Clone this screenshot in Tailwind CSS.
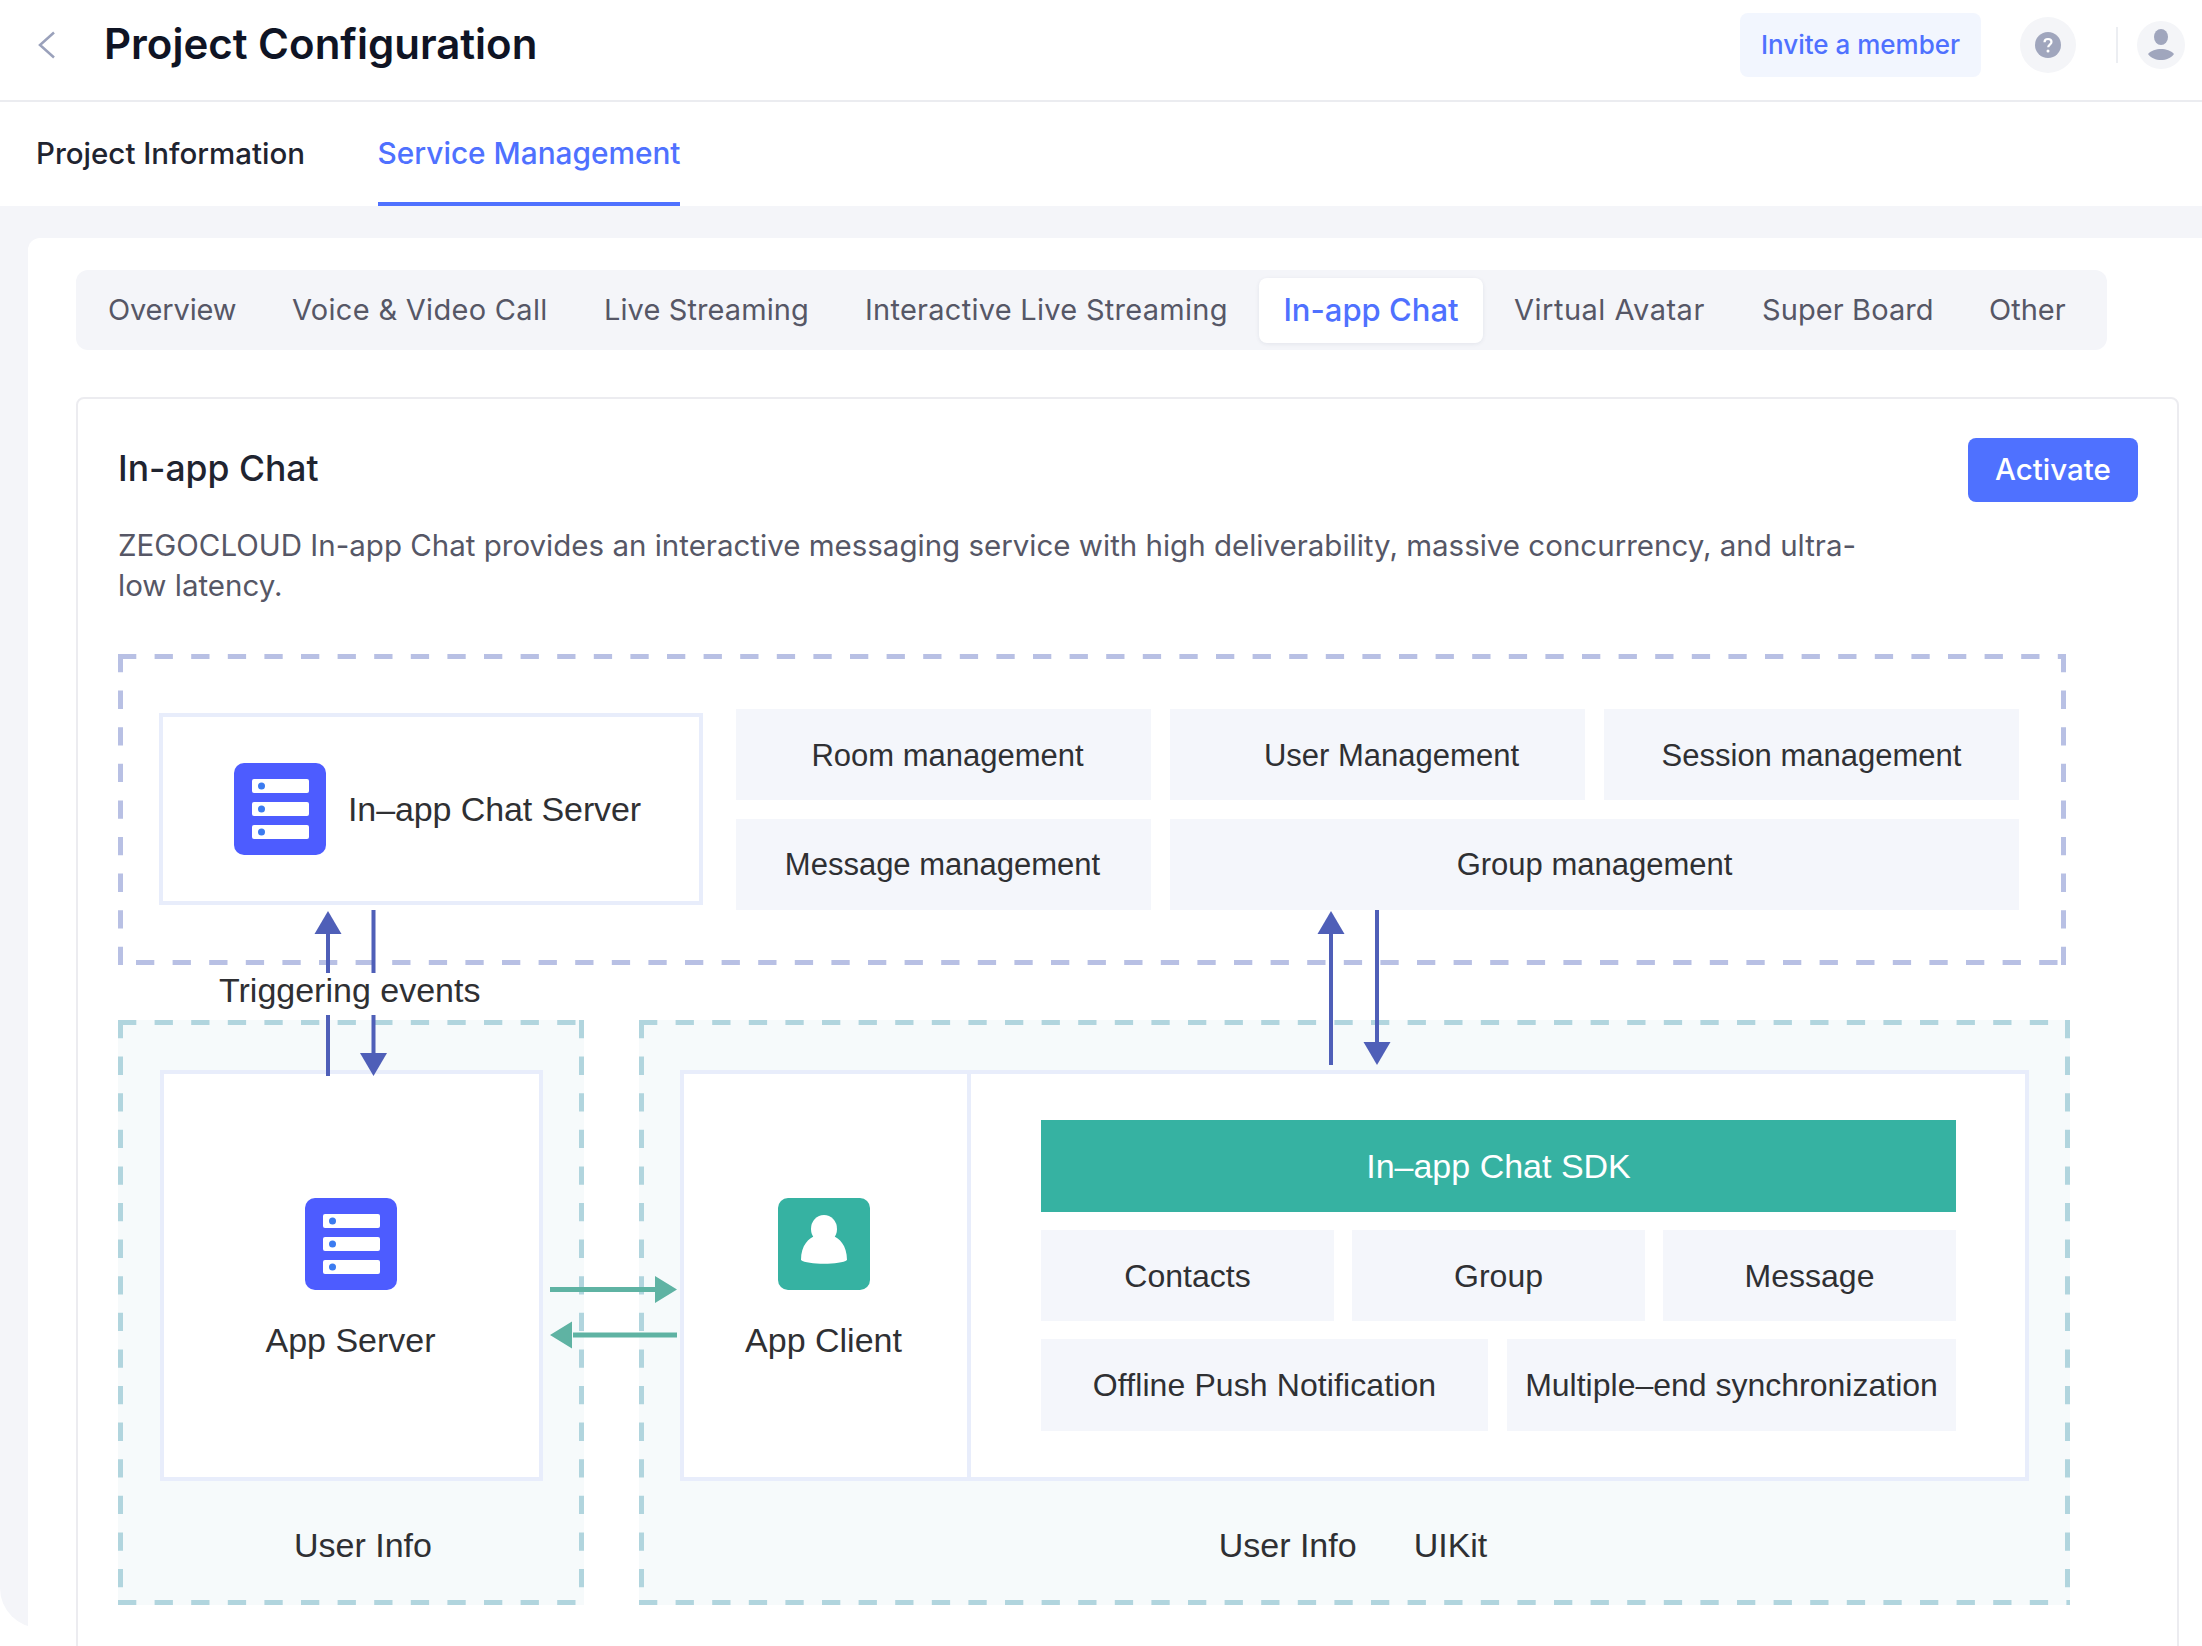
<!DOCTYPE html>
<html lang="en">
<head>
    <meta charset="UTF-8">
    <title>Project Configuration</title>
    <script src="https://cdn.jsdelivr.net/npm/@tailwindcss/browser@4"></script>
</head>
<body class="bg-white font-['Inter',sans-serif]">
<div class="relative w-[2202px] h-[1646px] overflow-hidden bg-white">

    <!-- top bar -->
    <header class="flex items-center h-[102px] border-b-2 border-[#ebecf0] pl-[38px] pr-[17px] pb-[10px]">
        <svg class="w-[18px] h-[28px]" viewBox="0 0 18 28" fill="none" stroke="#9aa1bb" stroke-width="2.500"><path d="M16 1.500 2 14l14 12.500"/></svg>
        <h1 class="ml-[48px] pb-[3px] text-[42px] font-semibold text-[#0f1424]">Project Configuration</h1>
        <button class="ml-auto w-[241px] h-[64px] pb-[2px] rounded-lg bg-[#f2f6fe] text-[#4f71ff] text-[26px] font-medium">Invite a member</button>
        <div class="ml-[39px] w-[56px] h-[56px] rounded-full bg-[#f4f5f8] flex items-center justify-center">
            <svg class="w-[26px] h-[26px]" viewBox="0 0 26 26"><circle cx="13" cy="13" r="13" fill="#a0a6bd"/><path d="M9.500 10.200c0-2 1.500-3.200 3.500-3.200s3.500 1.200 3.500 3c0 2.600-3.300 2.700-3.300 5.300" fill="none" stroke="#fff" stroke-width="2.200"/><circle cx="13" cy="19" r="1.500" fill="#fff"/></svg>
        </div>
        <div class="ml-[40px] w-[2px] h-[36px] bg-[#eceef2]"></div>
        <div class="ml-[19px] w-[48px] h-[48px] rounded-full bg-[#f4f5f8] flex items-center justify-center">
            <svg class="w-[28px] h-[32px]" viewBox="0 0 28 32" fill="#a0a6bd"><ellipse cx="14" cy="8" rx="7" ry="8"/><path d="M1 25c3-3.500 8-5 13-5s10 1.500 13 5c-3 4-8 6-13 6s-10-2-13-6z"/></svg>
        </div>
    </header>

    <!-- main tabs -->
    <nav class="flex h-[104px] pl-[36px] gap-[73px] font-medium">
        <a class="w-[269px] flex items-center h-full pb-[2px] text-[29.500px] text-[#1f2430] whitespace-nowrap">Project Information</a>
        <a class="w-[302px] flex items-center justify-center h-full pt-[2px] text-[29.800px] text-[#4f71ff] border-b-4 border-[#4f71ff] whitespace-nowrap">Service Management</a>
    </nav>

    <!-- grey panel -->
    <main class="h-[1422px] bg-[#f4f5f9] rounded-bl-[40px] pl-[28px] pt-[32px]">
        <section class="h-[1500px] bg-white rounded-tl-[12px] pl-[48px] pr-[23px] pt-[32px]">
            <div class="flex items-center w-[2031px] h-[80px] bg-[#f4f5f9] rounded-xl pl-[32px] text-[29px] text-[#565766]">
                <span class="w-[128px] tracking-[-0.15px] whitespace-nowrap">Overview</span>
                <span class="ml-[56px] w-[256px] tracking-[0.3px] whitespace-nowrap">Voice &amp; Video Call</span>
                <span class="ml-[56px] w-[205px] tracking-[0.1px] whitespace-nowrap">Live Streaming</span>
                <span class="ml-[56px] w-[361px] tracking-[0.27px] whitespace-nowrap">Interactive Live Streaming</span>
                <span class="ml-[33px] w-[224px] h-[65px] flex items-center justify-center rounded-lg bg-white text-[#4f71ff] text-[31px] font-medium shadow-[0_1px_4px_rgba(30,40,80,0.08)] whitespace-nowrap">In-app Chat</span>
                <span class="ml-[31px] w-[191px] tracking-[0.5px] whitespace-nowrap">Virtual Avatar</span>
                <span class="ml-[57px] w-[170px] tracking-[0.1px] whitespace-nowrap">Super Board</span>
                <span class="ml-[57px] w-[78px] whitespace-nowrap">Other</span>
            </div>

            <div class="mt-[47px] h-[1300px] border-2 border-[#ececf0] rounded-t-lg pl-[40px] pr-[39px] pt-[39px]">
                <div class="flex items-center justify-between h-[64px]">
                    <h2 class="pb-[2px] text-[35.500px] font-medium text-[#1f2430]">In-app Chat</h2>
                    <button class="w-[170px] h-[64px] pb-[2px] rounded-lg bg-[#4f71ff] text-white text-[29.500px] font-medium">Activate</button>
                </div>
                <p class="mt-[23px] text-[29.500px] leading-[40px] text-[#565766] whitespace-nowrap">ZEGOCLOUD In-app Chat provides an interactive messaging service with high deliverability, massive concurrency, and ultra-<br>low latency.</p>

                <!-- diagram -->
                <div class="mt-[49px] w-[1952px] font-['Liberation_Sans',sans-serif] text-[34px] text-[#2f3033]">
                    <div class="relative w-[1948px] h-[311px] pt-[55px] pl-[41px] flex items-start gap-[33px]">
                        <svg class="absolute inset-0" width="1948" height="311" fill="none" stroke="#b8c0e4" stroke-width="5" stroke-dasharray="18.300 18.300"><path d="M0 2.500H1948M2.500 0V311M1945.500 0V311"/><path d="M18 308.500H1948"/></svg>
                        <div class="mt-1 w-[544px] h-[192px] border-4 border-[#e8edfb] flex items-center pl-[71px] gap-[22px] bg-white">
                            <svg class="w-[92px] h-[92px]" viewBox="0 0 92 92"><rect width="92" height="92" rx="10" fill="#4d5cff"/><g fill="#fff"><rect x="18" y="16" width="57" height="14" rx="2"/><rect x="18" y="39" width="57" height="14" rx="2"/><rect x="18" y="62" width="57" height="14" rx="2"/></g><g fill="#3b7bf0"><circle cx="27.500" cy="23" r="3.500"/><circle cx="27.500" cy="46" r="3.500"/><circle cx="27.500" cy="69" r="3.500"/></g></svg>
                            <span class="tracking-[-0.1px] whitespace-nowrap">In–app Chat Server</span>
                        </div>
                        <div class="grid grid-cols-[415px_415px_415px] grid-rows-[91px_91px] gap-[19px] text-[31px]">
                            <div class="bg-[#f4f6fb] flex items-center justify-center pl-[8px] pt-[3px] whitespace-nowrap">Room management</div>
                            <div class="bg-[#f4f6fb] flex items-center justify-center pl-[28px] pt-[3px] whitespace-nowrap">User Management</div>
                            <div class="bg-[#f4f6fb] flex items-center justify-center pt-[3px] whitespace-nowrap">Session management</div>
                            <div class="bg-[#f4f6fb] flex items-center justify-center pr-[2px] pt-[2px] whitespace-nowrap">Message management</div>
                            <div class="col-span-2 bg-[#f4f6fb] flex items-center justify-center pt-[2px] whitespace-nowrap">Group management</div>
                        </div>
                    </div>

                    <div class="mt-[55px] flex gap-[55px]">
                        <div class="relative w-[466px] h-[585px] bg-[#f6fafb] pt-[50px] pl-[42px]">
                            <svg class="absolute inset-0" width="466" height="585" fill="none" stroke="#b1d5de" stroke-width="5" stroke-dasharray="18.300 18.300"><path d="M0 2.500H466M2.500 0V585M463.500 0V585M0 582.500H466"/></svg>
                            <div class="relative w-[383px] h-[411px] border-4 border-[#e8edfb] bg-white flex flex-col items-center pt-[124px] pr-[2px]">
                                <svg class="w-[92px] h-[92px]" viewBox="0 0 92 92"><rect width="92" height="92" rx="10" fill="#4d5cff"/><g fill="#fff"><rect x="18" y="16" width="57" height="14" rx="2"/><rect x="18" y="39" width="57" height="14" rx="2"/><rect x="18" y="62" width="57" height="14" rx="2"/></g><g fill="#3b7bf0"><circle cx="27.500" cy="23" r="3.500"/><circle cx="27.500" cy="46" r="3.500"/><circle cx="27.500" cy="69" r="3.500"/></g></svg>
                                <span class="mt-[25px] whitespace-nowrap">App Server</span>
                            </div>
                            <div class="relative h-[124px] flex items-center justify-center pr-[18px] pt-[5px] whitespace-nowrap">User Info</div>
                        </div>

                        <div class="relative w-[1431px] h-[585px] bg-[#f6fafb] pt-[50px] pl-[41px]">
                            <svg class="absolute inset-0" width="1431" height="585" fill="none" stroke="#b1d5de" stroke-width="5" stroke-dasharray="18.300 18.300"><path d="M0 2.500H1431M2.500 0V585M1428.500 0V585M0 582.500H1431"/></svg>
                            <div class="relative w-[1349px] h-[411px] border-4 border-[#e8edfb] bg-white flex">
                                <div class="w-[287px] border-r-4 border-[#e8edfb] flex flex-col items-center pt-[124px] pr-[4px] shrink-0">
                                    <svg class="w-[92px] h-[92px]" viewBox="0 0 92 92"><rect width="92" height="92" rx="10" fill="#36b2a2"/><ellipse cx="46" cy="31" rx="13" ry="14" fill="#fff"/><path d="M23 62c0-15 8-22 14-24 5 2 13 2 18 0 6 2 14 9 14 24-6 5-40 5-46 0z" fill="#fff"/></svg>
                                    <span class="mt-[25px] whitespace-nowrap">App Client</span>
                                </div>
                                <div class="pl-[70px] pt-[46px] w-[985px] flex flex-col gap-[18px]">
                                    <div class="h-[92px] bg-[#36b2a2] text-white flex items-center justify-center whitespace-nowrap">In–app Chat SDK</div>
                                    <div class="flex gap-[18px] h-[91px] text-[32px]">
                                        <div class="flex-1 bg-[#f4f6fb] flex items-center justify-center whitespace-nowrap">Contacts</div>
                                        <div class="flex-1 bg-[#f4f6fb] flex items-center justify-center whitespace-nowrap">Group</div>
                                        <div class="flex-1 bg-[#f4f6fb] flex items-center justify-center whitespace-nowrap">Message</div>
                                    </div>
                                    <div class="flex gap-[19px] h-[92px] text-[32px]">
                                        <div class="w-[447px] bg-[#f4f6fb] flex items-center justify-center tracking-[0.1px] whitespace-nowrap">Offline Push Notification</div>
                                        <div class="flex-1 bg-[#f4f6fb] flex items-center justify-center whitespace-nowrap">Multiple–end synchronization</div>
                                    </div>
                                </div>
                            </div>
                            <div class="relative h-[124px] flex items-center justify-center gap-[57px] pr-[44px] pt-[5px] whitespace-nowrap">
                                <span>User Info</span><span>UIKit</span>
                            </div>
                        </div>
                    </div>
                </div>
            </div>
        </section>
    </main>

    <!-- connector arrows over the diagram -->
    <svg class="absolute inset-0 pointer-events-none" width="2202" height="1646" fill="none">
        <g stroke="#4f5fb8" stroke-width="4">
            <path d="M328 930V973M373.500 910V973M328 1015V1076M373.500 1015V1056"/>
            <path d="M1331 930V1065M1377 910V1046"/>
        </g>
        <g fill="#4f5fb8">
            <path d="M328 911l13.500 23h-27z"/>
            <path d="M373.500 1076l-13.500-23h27z"/>
            <path d="M1331 911l13.500 23h-27z"/>
            <path d="M1377 1065l-13.500-23h27z"/>
        </g>
        <path d="M550 1289.500H658M573 1335H677" stroke="#5fb3a3" stroke-width="5"/>
        <path d="M677 1289.500l-22-13.500v27zM550 1335l22-13.500v27z" fill="#5fb3a3"/>
    </svg>
    <span class="absolute left-[219px] top-[970px] font-['Liberation_Sans',sans-serif] text-[34px] leading-[40px] text-[#2f3033] whitespace-nowrap">Triggering events</span>
</div>
</body>
</html>
